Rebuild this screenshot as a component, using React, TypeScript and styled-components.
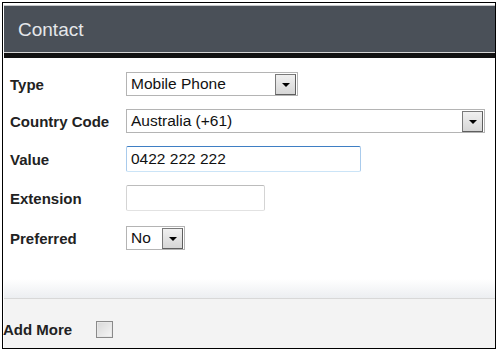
import React from "react";
import styled, { createGlobalStyle } from "styled-components";

const GlobalStyle = createGlobalStyle`
  html, body {
    margin: 0;
    padding: 0;
    background: #fff;
  }
  body {
    font-family: "Liberation Sans", Arial, sans-serif;
  }
`;

const Frame = styled.div`
  box-sizing: border-box;
  margin: 2px;
  width: 494px;
  height: 347px;
  border: 1px solid #000;
  padding: 2px 0 0 1px;
  display: flex;
  flex-direction: column;
  background: #fff;
`;

const Header = styled.div`
  height: 48px;
  border-top: 1px solid #c6c8ca;
  border-bottom: 1px solid #d6d6d6;
  background: #4a5058;
  display: flex;
  align-items: center;
  padding-left: 14px;
  padding-top: 2px;
  box-sizing: border-box;
  color: #e4e7ea;
  font-size: 19px;
`;

const HeaderRule = styled.div`
  height: 5px;
  background: #121212;
`;

const Body = styled.div`
  flex: 1;
  padding: 7px 0 0 6px;
  background: linear-gradient(#fff calc(100% - 19px), #eceef1);
`;

const Row = styled.div<{ $offset?: number }>`
  height: 38px;
  margin-top: ${(p) => p.$offset ?? 0}px;
  display: flex;
  align-items: center;
`;

const Label = styled.div`
  width: 116px;
  font-size: 15px;
  font-weight: bold;
  color: #222;
`;

const SelectBox = styled.div<{ $width: number }>`
  box-sizing: border-box;
  width: ${(p) => p.$width}px;
  height: 24px;
  border: 1px solid #b4b4b4;
  background: #fff;
  display: flex;
  align-items: center;
  justify-content: space-between;
  padding: 0 1px 0 4px;
  font-size: 15.5px;
  color: #111;
`;

const DropButton = styled.span`
  box-sizing: border-box;
  width: 21px;
  height: 21px;
  border: 1px solid #7a7a7a;
  border-right-color: #5e5e5e;
  border-bottom-color: #5e5e5e;
  background: linear-gradient(#f0f0f0, #d6d6d6);
  display: flex;
  align-items: center;
  justify-content: center;

  &::after {
    content: "";
    width: 0;
    height: 0;
    border-left: 4px solid transparent;
    border-right: 4px solid transparent;
    border-top: 4px solid #000;
    margin-top: 2px;
  }
`;

const TextInput = styled.div<{ $width: number; $focused?: boolean }>`
  box-sizing: border-box;
  width: ${(p) => p.$width}px;
  height: 26px;
  border: 1px solid ${(p) => (p.$focused ? "#a9cbec" : "#d4d4d4")};
  border-top-color: ${(p) => (p.$focused ? "#3f7fc4" : "#bcbcbc")};
  border-bottom-color: ${(p) => (p.$focused ? "#cbe4f7" : "#e2e2e2")};
  border-radius: 2px;
  background: #fff;
  display: flex;
  align-items: center;
  padding-left: 4px;
  font-size: 15.5px;
  color: #111;
`;

const Footer = styled.div`
  height: 50px;
  box-sizing: border-box;
  border-top: 1px solid #d8d8d8;
  background: #f3f3f3;
  padding-top: 22px;
  display: flex;
  align-items: flex-start;
  gap: 24px;
`;

const FooterLabel = styled.span`
  font-size: 15px;
  font-weight: bold;
  color: #222;
  line-height: 17px;
  margin-left: -1px;
`;

const Checkbox = styled.span`
  box-sizing: border-box;
  width: 17px;
  height: 17px;
  border: 1px solid #8a8a8a;
  background: linear-gradient(135deg, #d8d8d8, #f6f6f6);
  box-shadow: inset 0 0 0 1px #e8e8e8;
`;

export default function App() {
  return (
    <>
      <GlobalStyle />
      <Frame>
        <Header>Contact</Header>
        <HeaderRule />
        <Body>
          <Row>
            <Label>Type</Label>
            <SelectBox $width={172}>
              Mobile Phone
              <DropButton />
            </SelectBox>
          </Row>
          <Row $offset={-1}>
            <Label>Country Code</Label>
            <SelectBox $width={359}>
              Australia (+61)
              <DropButton />
            </SelectBox>
          </Row>
          <Row>
            <Label>Value</Label>
            <TextInput $width={235} $focused>
              0422 222 222
            </TextInput>
          </Row>
          <Row $offset={1}>
            <Label>Extension</Label>
            <TextInput $width={139} />
          </Row>
          <Row $offset={2}>
            <Label>Preferred</Label>
            <SelectBox $width={59}>
              No
              <DropButton />
            </SelectBox>
          </Row>
        </Body>
        <Footer>
          <FooterLabel>Add More</FooterLabel>
          <Checkbox />
        </Footer>
      </Frame>
    </>
  );
}
